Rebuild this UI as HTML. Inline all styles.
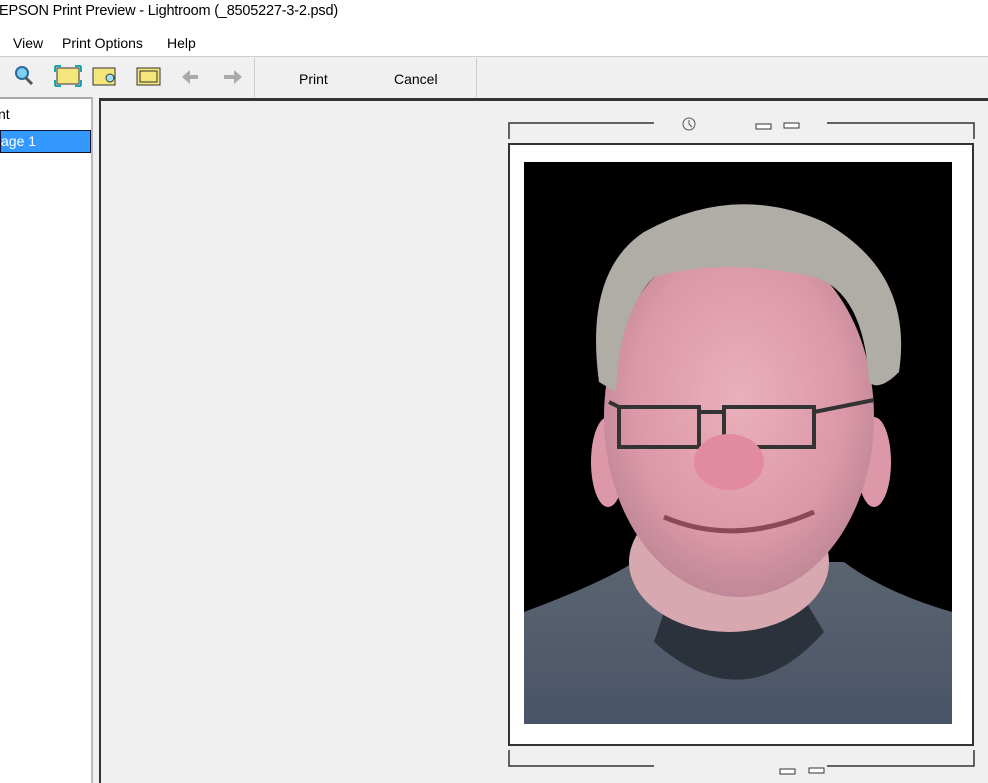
<!DOCTYPE html>
<html><head><style>
*{margin:0;padding:0;box-sizing:border-box}
body{width:988px;height:783px;overflow:hidden;background:#f0f0f0;font-family:"Liberation Sans",sans-serif;position:relative;color:#000}
.a{position:absolute}
</style></head><body>
<div class="a" style="left:0;top:0;width:988px;height:56px;background:#fff"></div>
<div class="a" style="left:-1px;top:3px;font-size:14.5px;letter-spacing:-0.2px">EPSON Print Preview - Lightroom (_8505227-3-2.psd)</div>
<div class="a" style="left:13px;top:35px;font-size:14px">View</div>
<div class="a" style="left:62px;top:35px;font-size:14px">Print Options</div>
<div class="a" style="left:167px;top:35px;font-size:14px">Help</div>
<div class="a" style="left:0;top:56px;width:988px;height:1px;background:#ccc"></div>
<svg class="a" style="left:8px;top:62px" width="240" height="30">
<circle cx="14" cy="11" r="6" fill="#7fd0f0" stroke="#2a6a9a" stroke-width="2"/>
<line x1="18" y1="16" x2="24" y2="22" stroke="#555" stroke-width="3"/>
<rect x="49" y="6" width="22" height="16" fill="#f3e67a" stroke="#333"/>
<path d="M47 4l6 0M47 4l0 6M73 4l-6 0M73 4l0 6M47 24l6 0M47 24l0-6M73 24l-6 0M73 24l0-6" stroke="#1aa6b0" stroke-width="2"/>
<rect x="85" y="6" width="22" height="17" fill="#f3e67a" stroke="#333"/>
<circle cx="102" cy="16" r="4" fill="#9fe0f0" stroke="#333"/>
<rect x="129" y="6" width="23" height="17" fill="#f3e67a" stroke="#333"/>
<rect x="132" y="9" width="17" height="11" fill="none" stroke="#333"/>
<path d="M176 15h14" stroke="#aaa" stroke-width="4"/><path d="M174 15l8-7v14z" fill="#aaa"/>
<path d="M216 15h14" stroke="#aaa" stroke-width="4"/><path d="M234 15l-8-7v14z" fill="#aaa"/>
</svg>
<div class="a" style="left:254px;top:58px;width:1px;height:39px;background:#ccc"></div>
<div class="a" style="left:476px;top:58px;width:1px;height:39px;background:#ccc"></div>
<div class="a" style="left:299px;top:71px;font-size:14px">Print</div>
<div class="a" style="left:394px;top:71px;font-size:14px">Cancel</div>
<div class="a" style="left:0;top:97px;width:93px;height:686px;background:#fff;border-top:2px solid #aaa;border-right:2px solid #bbb"></div>
<div class="a" style="left:-2px;top:106px;font-size:14px">nt</div>
<div class="a" style="left:0;top:130px;width:91px;height:23px;background:#3399ff;border:1px solid #113;color:#fff;font-size:14px;padding:2px 0 0 0">age 1</div>
<div class="a" style="left:99px;top:98px;width:889px;height:685px;border-left:2px solid #333;border-top:3px solid #333;background:#f0f0f0"></div>
<svg class="a" style="left:500px;top:110px" width="488" height="673">
<path d="M9 29V13h145M327 13h147v16" stroke="#333" stroke-width="1.5" fill="none"/>
<circle cx="189" cy="14" r="6" fill="none" stroke="#555"/><path d="M189 10v4l3 3" stroke="#555" fill="none"/>
<rect x="256" y="14" width="15" height="5" fill="#fff" stroke="#333"/>
<rect x="284" y="13" width="15" height="5" fill="#fff" stroke="#333"/>
<path d="M9 640v16h145M327 656h147v-16" stroke="#333" stroke-width="1.5" fill="none"/>
<rect x="280" y="659" width="15" height="5" fill="#fff" stroke="#333"/>
<rect x="309" y="658" width="15" height="5" fill="#fff" stroke="#333"/>
</svg>
<div class="a" style="left:508px;top:143px;width:466px;height:603px;background:#fff;border:2px solid #333"></div>
<svg class="a" style="left:524px;top:162px" width="428" height="562">
<defs>
<radialGradient id="sk" cx=".5" cy=".45" r=".55"><stop offset="0" stop-color="#eab0bc"/><stop offset=".7" stop-color="#dc98a8"/><stop offset="1" stop-color="#c08898"/></radialGradient>
<linearGradient id="sh" x1="0" y1="0" x2="0" y2="1"><stop offset="0" stop-color="#5a6470"/><stop offset="1" stop-color="#4a5468"/></linearGradient>
</defs>
<rect width="428" height="562" fill="#000"/>
<path d="M0 450 Q80 420 110 400 L320 400 Q360 430 428 450 V562 H0Z" fill="url(#sh)"/>
<path d="M150 420 Q210 520 270 420 L300 470 Q220 560 130 480Z" fill="#2c323c"/>
<ellipse cx="205" cy="400" rx="100" ry="70" fill="#d8a8b0"/>
<ellipse cx="84" cy="300" rx="17" ry="45" fill="#dc98a8"/>
<ellipse cx="350" cy="300" rx="17" ry="45" fill="#dc98a8"/>
<ellipse cx="215" cy="255" rx="135" ry="180" fill="url(#sk)"/>
<path d="M75 220 Q60 110 120 70 Q210 20 300 60 Q390 110 375 210 Q355 230 345 220 Q340 130 290 115 Q200 95 130 115 Q95 150 92 230 Z" fill="#b0aca6"/>
<path d="M95 245 h80 v40 h-80z M200 245 h90 v40 h-90z" fill="none" stroke="#333" stroke-width="4"/>
<path d="M175 250h25M85 240l10 5M290 250l60-12" stroke="#333" stroke-width="4"/>
<ellipse cx="205" cy="300" rx="35" ry="28" fill="#e28aa0"/>
<path d="M140 355 Q210 385 290 350" stroke="#8a4858" stroke-width="5" fill="none"/>
</svg>
</body></html>
